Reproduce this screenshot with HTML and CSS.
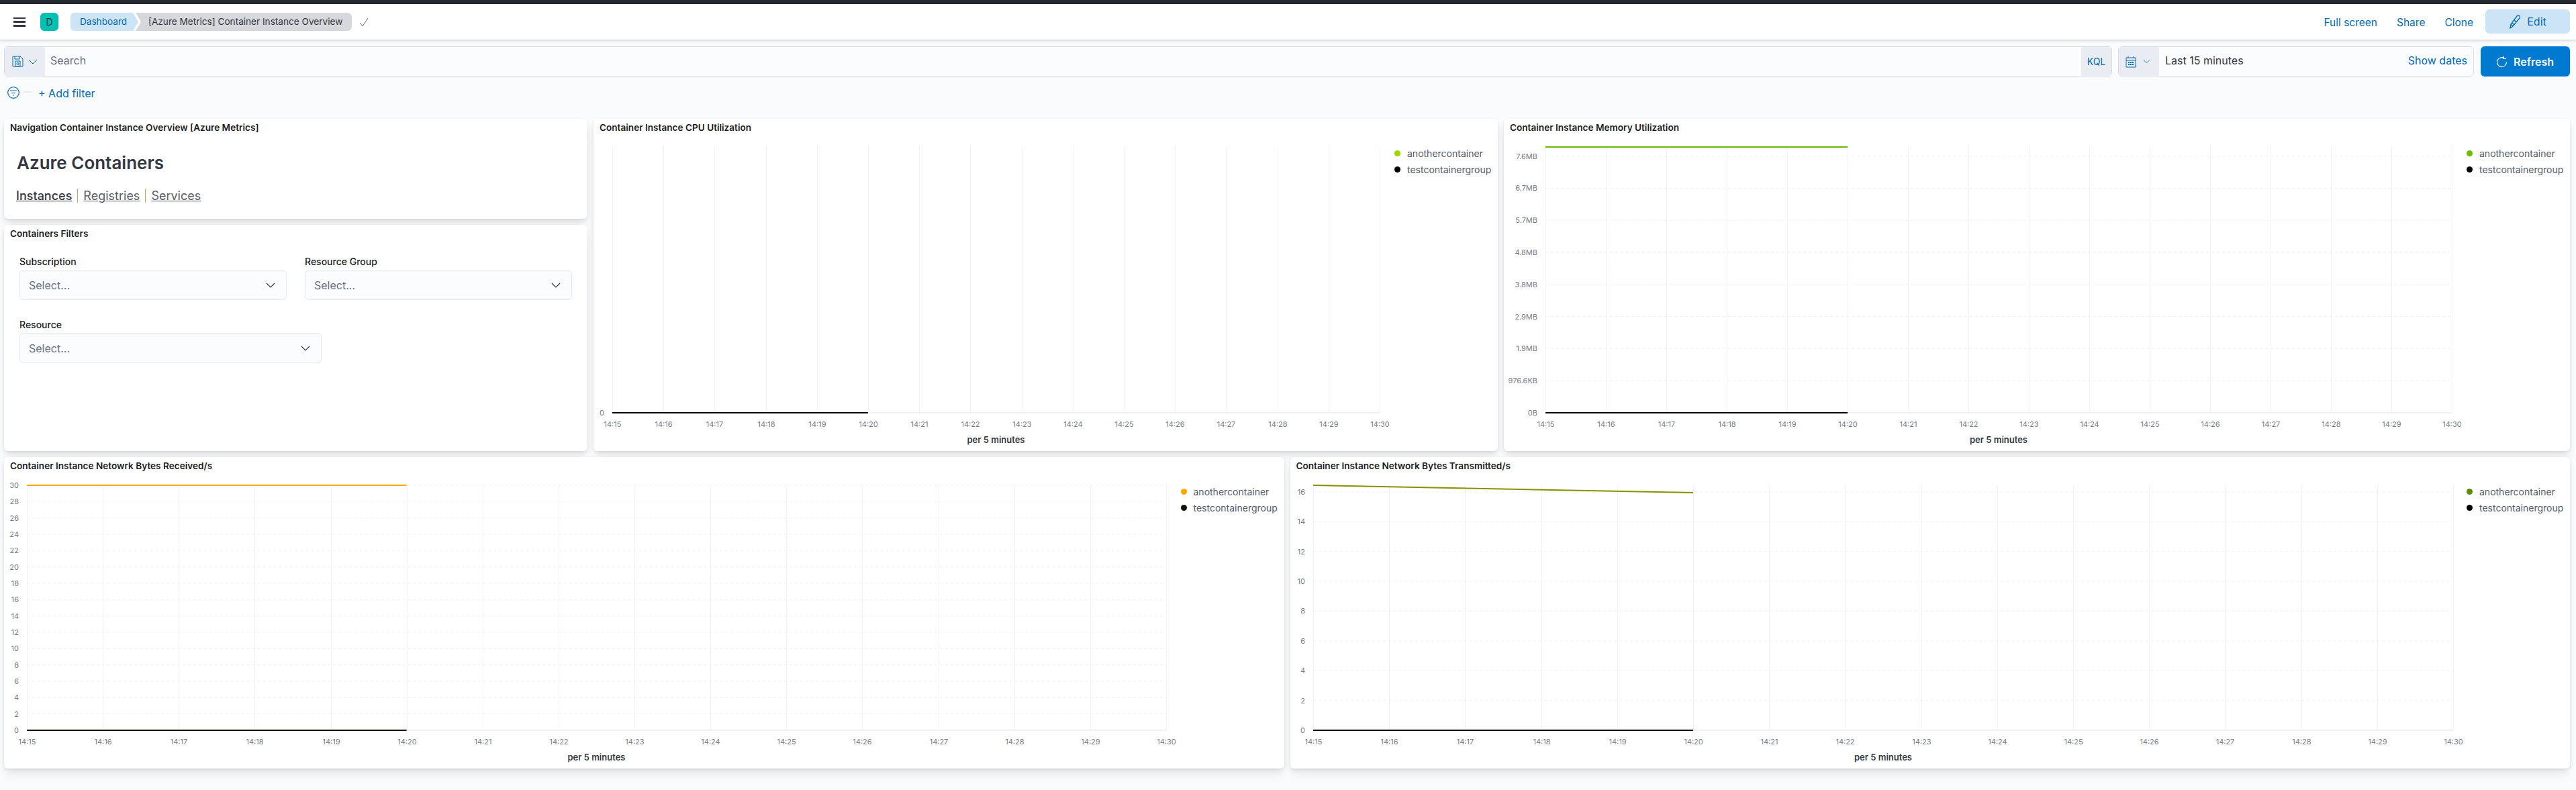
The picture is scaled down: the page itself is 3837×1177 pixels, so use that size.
FILE: index.html
```html
<!DOCTYPE html>
<html>
<head>
    <meta charset="utf-8">
    <title>[Azure Metrics] Container Instance Overview - Kibana</title>
    <link rel="stylesheet" href="styles.css">
</head>
<body>
    <div class="topline"></div>
    <header class="header">
        <div class="burger"><span></span><span></span><span></span></div>
        <div class="avatar">D</div>
        <nav class="crumbs">
            <a class="crumb crumb-first">Dashboard</a>
            <a class="crumb crumb-last">[Azure Metrics] Container Instance Overview</a>
        </nav>
        <svg class="check" width="16" height="16" viewBox="0 0 16 16"><path d="M2 9l4 5L14 2" fill="none" stroke="#69707d" stroke-width="1"/></svg>
        <div class="header-links">
            <a>Full screen</a>
            <a>Share</a>
            <a>Clone</a>
            <button class="edit-btn">
                <svg width="18" height="22" viewBox="0 0 18 22"><path d="M2 21l1-6L12 3c1.500-1.500 3-1.500 4 0s.5 2.500-.5 3.500L6 18zM3 15l3 3M5 13l3 3M8 9l3 3" fill="none" stroke="#006bb4" stroke-width="1.300"/></svg>
                Edit
            </button>
        </div>
    </header>

    <div class="querybar">
        <div class="searchbox">
            <div class="prepend prepend-save">
                <svg width="17" height="17" viewBox="0 0 17 17"><path d="M1 1h11l4 4v11H1zM4 1v4h7V1M5 8h7v8H5z" fill="none" stroke="#006bb4"/><circle cx="8.500" cy="12" r="1.500" fill="none" stroke="#006bb4"/></svg>
                <svg class="chev" width="14" height="8" viewBox="0 0 14 8"><path d="M1 1l6 6 6-6" fill="none" stroke="#006bb4"/></svg>
            </div>
            <div class="search-input">Search</div>
            <div class="kql">KQL</div>
        </div>
        <div class="datebox">
            <div class="prepend prepend-date">
                <svg width="16" height="18" viewBox="0 0 16 18"><path d="M1 3h14v14H1zM1 7h14M4 1v3M12 1v3" fill="none" stroke="#006bb4"/><path d="M4 9h2v2H4zM7 9h2v2H7zM10 9h2v2h-2zM4 12h2v2H4zM7 12h2v2H7zM10 12h2v2h-2z" fill="#006bb4"/></svg>
                <svg class="chev" width="11" height="7" viewBox="0 0 14 8"><path d="M1 1l6 6 6-6" fill="none" stroke="#006bb4"/></svg>
            </div>
            <div class="date-text">Last 15 minutes</div>
            <a class="show-dates">Show dates</a>
        </div>
        <button class="refresh-btn">
            <svg width="16" height="18" viewBox="0 0 16 18"><path d="M11 3.500a7 7 0 1 0 3.500 6M10 .5v4h4" fill="none" stroke="#fff" stroke-width="1.200"/></svg>
            Refresh
        </button>
    </div>

    <div class="filterbar">
        <svg class="filter-icon" width="18" height="18" viewBox="0 0 18 18"><circle cx="9" cy="9" r="8.300" fill="none" stroke="#006bb4" stroke-width="1.200"/><path d="M4 6h10M6 9.500h6M8 13h2" stroke="#006bb4" stroke-width="1.200"/></svg>
        <span class="filter-dash"></span>
        <a class="add-filter">+ Add filter</a>
    </div>

    <main class="dashboard">
        <div class="row row-top">
            <div class="col-left">
                <section class="panel panel-nav">
                    <div class="panel-title">Navigation Container Instance Overview [Azure Metrics]</div>
                    <h1 class="nav-head">Azure Containers</h1>
                    <div class="nav-links">
                        <a class="active">Instances</a>
                        <a>Registries</a>
                        <a>Services</a>
                    </div>
                </section>
                <section class="panel panel-filters">
                    <div class="panel-title">Containers Filters</div>
                    <div class="control-row">
                        <div class="control">
                            <label>Subscription</label>
                            <div class="select"><span>Select...</span><svg width="14" height="8" viewBox="0 0 14 8"><path d="M1 1l6 6 6-6" fill="none" stroke="#343741" stroke-width="1.200"/></svg></div>
                        </div>
                        <div class="control">
                            <label>Resource Group</label>
                            <div class="select"><span>Select...</span><svg width="14" height="8" viewBox="0 0 14 8"><path d="M1 1l6 6 6-6" fill="none" stroke="#343741" stroke-width="1.200"/></svg></div>
                        </div>
                    </div>
                    <div class="control-row">
                        <div class="control control-wide">
                            <label>Resource</label>
                            <div class="select"><span>Select...</span><svg width="14" height="8" viewBox="0 0 14 8"><path d="M1 1l6 6 6-6" fill="none" stroke="#343741" stroke-width="1.200"/></svg></div>
                        </div>
                    </div>
                </section>
            </div>

            <section class="panel panel-cpu">
                <div class="panel-title">Container Instance CPU Utilization</div>
                <div class="chart-body">
                    <svg class="chart" id="chart-cpu"></svg>
                    <ul class="legend">
                        <li><i style="background:#9ad800"></i>anothercontainer</li>
                        <li><i style="background:#000"></i>testcontainergroup</li>
                    </ul>
                </div>
            </section>

            <section class="panel panel-mem">
                <div class="panel-title">Container Instance Memory Utilization</div>
                <div class="chart-body">
                    <svg class="chart" id="chart-mem"></svg>
                    <ul class="legend">
                        <li><i style="background:#6dbe00"></i>anothercontainer</li>
                        <li><i style="background:#000"></i>testcontainergroup</li>
                    </ul>
                </div>
            </section>
        </div>

        <div class="row row-bottom">
            <section class="panel panel-half">
                <div class="panel-title">Container Instance Netowrk Bytes Received/s</div>
                <div class="chart-body">
                    <svg class="chart" id="chart-rx"></svg>
                    <ul class="legend">
                        <li><i style="background:#ffa500"></i>anothercontainer</li>
                        <li><i style="background:#1a1200"></i>testcontainergroup</li>
                    </ul>
                </div>
            </section>
            <section class="panel panel-half">
                <div class="panel-title">Container Instance Network Bytes Transmitted/s</div>
                <div class="chart-body">
                    <svg class="chart" id="chart-tx"></svg>
                    <ul class="legend">
                        <li><i style="background:#5c8c00"></i>anothercontainer</li>
                        <li><i style="background:#000"></i>testcontainergroup</li>
                    </ul>
                </div>
            </section>
        </div>
    </main>
    <script src="charts.js"></script>
</body>
</html>
```

FILE: styles.css
```css
* {box-sizing: border-box;}
html, body {margin: 0; padding: 0;}
body {
    width: 3837px;
    height: 1177px;
    overflow: hidden;
    background: #fafbfd;
    color: #343741;
    font-family: Inter, "Noto Sans", sans-serif;
    font-size: 14px;
}
a {color: #006bb4;}
button {font-family: inherit; border: none;}

.topline {height: 6px; background: #25282f;}

.header {
    height: 53px;
    display: flex;
    align-items: center;
    padding: 0 9px 0 20px;
    background: #fff;
    box-shadow: 0 2px 4px rgba(0,0,0,.15);
    position: relative;
}
.burger {width: 18px; height: 14px; display: flex; flex-direction: column; justify-content: space-between; margin-right: 22px;}
.burger span {display: block; height: 2.5px; background: #343741;}
.avatar {
    width: 27px;
    height: 27px;
    border-radius: 6px;
    background: #00bfb3;
    text-align: center;
    line-height: 27px;
    font-size: 14px;
    margin-right: 18px;
}
.crumbs {display: flex; height: 27px;}
.crumb {line-height: 27px; font-size: 13.6px;}
.crumb-first {
    width: 101px;
    padding-left: 14px;
    background: #cce4f5;
    border-radius: 6px 0 0 6px;
    clip-path: polygon(0 0, 93px 0, 100% 50%, 93px 100%, 0 100%);
}
.crumb-last {
    width: 322px;
    margin-left: -4px;
    padding-left: 19px;
    color: #343741;
    background: #d6d8db;
    border-radius: 0 6px 6px 0;
    clip-path: polygon(0 0, 100% 0, 100% 100%, 0 100%, 8px 50%);
}
.check {margin-left: 10px;}
.header-links {margin-left: auto; display: flex; align-items: center; font-size: 15.5px;}
.header-links a {margin-right: 29px; padding-top: 1px;}
.header-links a:nth-child(3) {margin-right: 18px;}
.edit-btn {
    width: 126px;
    height: 36px;
    margin-top: -2px;
    background: #cce4f5;
    color: #006bb4;
    border-radius: 6px;
    font-size: 16px;
    display: flex;
    align-items: center;
    justify-content: center;
    gap: 9px;
}

.querybar {display: flex; height: 45px; margin-top: 10px; padding-left: 6px;}
.searchbox, .datebox {
    display: flex;
    border: 1px solid #d8dde8;
    border-radius: 6px;
    background: #fbfcfd;
    overflow: hidden;
    font-size: 16px;
}
.searchbox {width: 3140px; margin-right: 9px;}
.datebox {width: 530px; margin-right: 10px; align-items: stretch;}
.prepend {background: #e9edf3; display: flex; align-items: center;}
.prepend-save {width: 60px; padding-left: 11px; gap: 7px;}
.prepend-date {width: 60px; padding-left: 10px; gap: 10px;}
.search-input {flex: 1; padding-left: 8px; line-height: 41px; color: #69707d;}
.kql {width: 45px; background: #e9edf3; color: #006bb4; font-size: 14px; text-align: center; line-height: 43px;}
.date-text {flex: 1; padding-left: 9px; line-height: 41px;}
.show-dates {padding-right: 9px; line-height: 41px;}
.refresh-btn {
    width: 133px;
    background: #0079d0;
    color: #fff;
    border-radius: 6px;
    font-size: 16px;
    font-weight: 600;
    display: flex;
    align-items: center;
    justify-content: center;
    gap: 9px;
}

.filterbar {height: 63px; display: flex; align-items: center; padding: 0 0 14px 11px; font-size: 16px;}
.filter-icon {margin-bottom: 2px;}
.filter-dash {width: 12px; height: 2px; margin: 0 10px 4px 6px; background: #e9edf3;}

.dashboard {padding: 0 9px 0 6px;}
.row {display: flex; gap: 9px;}
.row-top {height: 495px; margin-bottom: 9px;}
.row-bottom {height: 464px;}
.col-left {width: 869px; display: flex; flex-direction: column; gap: 9px;}
.panel {
    background: #fff;
    border-radius: 6px;
    display: flex;
    flex-direction: column;
    box-shadow: 0 1px 4px -1px rgba(0,0,0,.08), 0 3px 8px -1px rgba(0,0,0,.06), 0 6px 12px -1px rgba(0,0,0,.05), 0 15px 15px -1px rgba(0,0,0,.03);
}
.panel-nav {height: 149px;}
.panel-filters {flex: 1;}
.panel-cpu {width: 1347px;}
.panel-mem {flex: 1;}
.panel-half {flex: 1;}
.panel-title {
    height: 30px;
    flex: none;
    padding: 3px 9px 0;
    line-height: 20px;
    font-size: 13.6px;
    font-weight: 600;
    color: #1a1c21;
}

.nav-head {margin: 18px 0 0 19px; font-size: 26px; line-height: 36px; font-weight: 600; color: #343741;}
.nav-links {display: flex; margin: 20px 0 0 18px; font-size: 18px; line-height: 21px;}
.nav-links a {color: #5a5e66; text-decoration: underline; padding: 0 8px 0 0; margin-right: 8px; border-right: 1px solid #c9a36a;}
.nav-links a:last-child {border-right: none;}
.nav-links a.active {color: #343741; font-weight: 500;}

.control-row {display: flex; gap: 27px; padding: 16px 23px 0; margin-bottom: 12px;}
.control {width: 398px;}
.control-wide {width: 450px;}
.control label {display: block; height: 18px; line-height: 18px; margin-bottom: 3px; font-size: 14px; font-weight: 500; color: #1a1c21;}
.select {
    height: 45px;
    display: flex;
    align-items: center;
    justify-content: space-between;
    padding: 0 16px 0 13px;
    background: #fbfcfd;
    border: 1px solid #e4e8f0;
    border-radius: 6px;
    font-size: 16px;
    color: #69707d;
}

.chart-body {flex: 1; display: flex; min-height: 0;}
.chart {flex: 1; min-width: 0; height: 100%; display: block;}
.chart text {font-family: Inter, "Noto Sans", sans-serif; font-size: 11px; fill: #777c86;}
.chart .axis-title {font-size: 13px; font-weight: 600; fill: #343741;}
.legend {width: 154px; flex: none; list-style: none; margin: 0; padding: 9px 0 0; font-size: 14px; color: #535966;}
.legend li {display: flex; align-items: center; height: 24px;}
.legend i {width: 9px; height: 9px; border-radius: 50%; margin-right: 10px;}
```

FILE: charts.js
```js
var times = [];
for (var m = 15; m <= 30; m++) {
    times.push("14:" + m);
}

function range(max, stepBy) {
    var list = [];
    for (var v = 0; v <= max; v += stepBy) {
        list.push(String(v));
    }
    return list;
}

var charts = {
    "chart-cpu": {
        left: 28, step: 76.2, top: 11, base: 408, tickGap: 0,
        labels: ["0"],
        lines: [["#000", 0, 408, 5, 408]]
    },
    "chart-mem": {
        left: 62, step: 90, top: 11, base: 408, tickGap: 47.8,
        labels: ["0B", "976.6KB", "1.9MB", "2.9MB", "3.8MB", "4.8MB", "5.7MB", "6.7MB", "7.6MB"],
        lines: [["#6eb800", 0, 12, 5, 12], ["#000", 0, 408, 5, 408]]
    },
    "chart-rx": {
        left: 34, step: 113.13, top: 12, base: 377, tickGap: 24.33,
        labels: range(30, 2),
        lines: [["#ffa500", 0, 12, 5, 12], ["#1a1200", 0, 377, 5, 377]]
    },
    "chart-tx": {
        left: 34, step: 113.2, top: 12, base: 377, tickGap: 44.4,
        labels: range(16, 2),
        lines: [["#8a9000", 0, 12, 5, 23], ["#000", 0, 377, 5, 377]]
    }
};

function drawChart(id, c) {
    var svg = document.getElementById(id);
    var right = c.left + c.step * 15;
    var html = "";

    // horizontal grid and y labels
    c.labels.forEach(function (label, i) {
        var y = c.base - i * c.tickGap;
        if (i > 0) {
            html += '<line x1="' + c.left + '" x2="' + right + '" y1="' + y + '" y2="' + y + '" stroke="#f0f1f3" stroke-dasharray="4 4"/>';
        }
        html += '<text x="' + (c.left - 12) + '" y="' + (y + 4) + '" text-anchor="end">' + label + '</text>';
    });

    // vertical grid and time labels
    times.forEach(function (t, i) {
        var x = Math.round(c.left + i * c.step) + 0.5;
        html += '<line x1="' + x + '" x2="' + x + '" y1="' + c.top + '" y2="' + c.base + '" stroke="#f1f2f4"/>';
        html += '<text x="' + x + '" y="' + (c.base + 21) + '" text-anchor="middle">' + t + '</text>';
    });

    html += '<line x1="' + c.left + '" x2="' + right + '" y1="' + c.base + '" y2="' + c.base + '" stroke="#eeeff1" stroke-width="2"/>';

    // series, the x values count in time ticks
    c.lines.forEach(function (l) {
        html += '<line x1="' + (c.left + l[1] * c.step) + '" y1="' + l[2] + '" x2="' + (c.left + l[3] * c.step) + '" y2="' + l[4] + '" stroke="' + l[0] + '" stroke-width="2"/>';
    });

    html += '<text class="axis-title" x="' + ((c.left + right) / 2) + '" y="' + (c.base + 45) + '" text-anchor="middle">per 5 minutes</text>';
    svg.innerHTML = html;
}

for (var id in charts) {
    drawChart(id, charts[id]);
}
```
